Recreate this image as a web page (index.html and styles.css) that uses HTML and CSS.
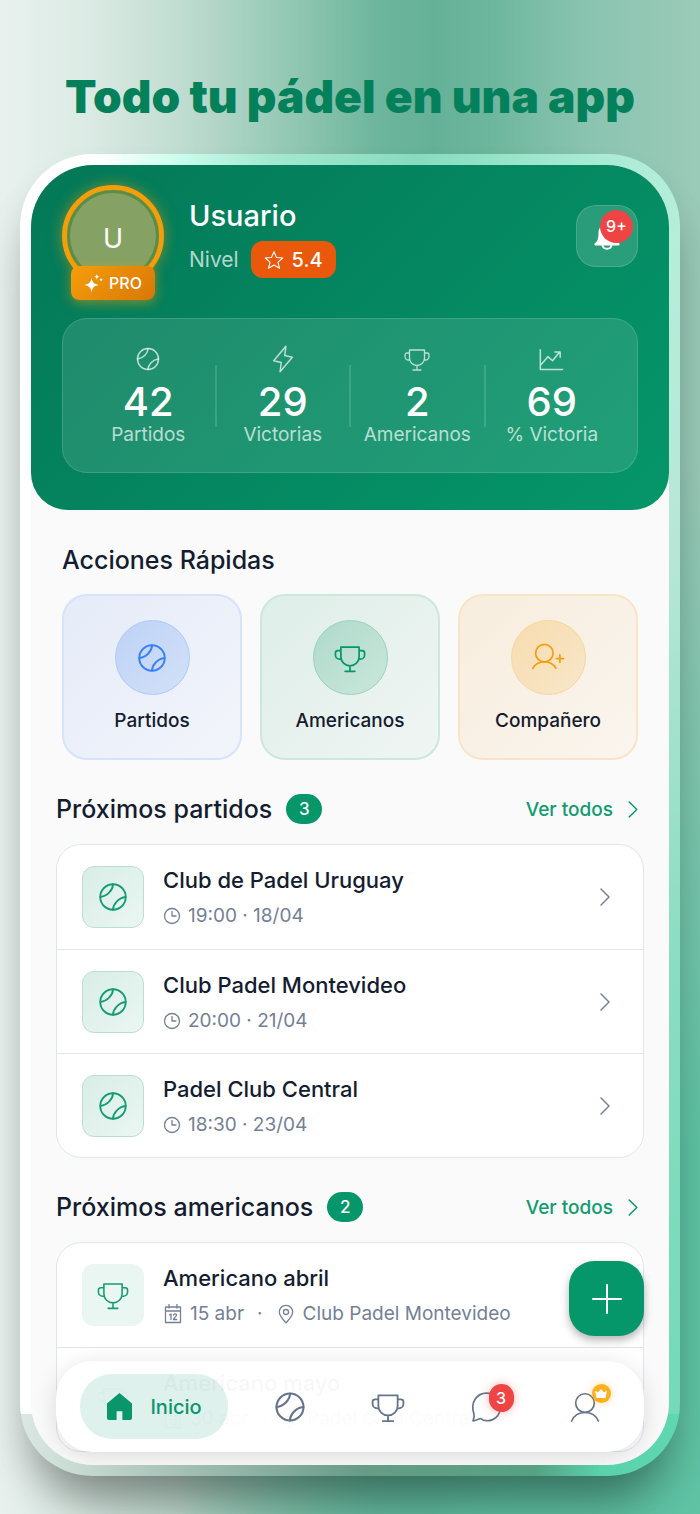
FILE: index.html
```html
<!DOCTYPE html>
<html lang="es">
<head>
<meta charset="utf-8">
<meta name="viewport" content="width=device-width, initial-scale=1">
<title>Todo tu pádel en una app</title>
<link rel="stylesheet" href="styles.css">
</head>
<body>
<svg class="defs" aria-hidden="true">
  <symbol id="ball" viewBox="0 0 24 24"><circle cx="12" cy="12" r="9"/><path d="M12 3C12 7 8 11.500 3.100 12M12 21C12 17 16 12.500 20.900 12"/></symbol>
  <symbol id="trophy" viewBox="0 0 28 24"><path d="M6.500 3h15v8a7.500 7.500 0 0 1-15 0zM6.500 6H4a2 2 0 0 0-2 2v1.500A3.500 3.500 0 0 0 5.500 13h1.300M21.500 6H24a2 2 0 0 1 2 2v1.500a3.500 3.500 0 0 1-3.500 3.500h-1.300M14 18.500V23M10 23h8"/></symbol>
  <symbol id="chevron" viewBox="0 0 12 20"><path d="M2 2l8 8-8 8"/></symbol>
  <symbol id="clock" viewBox="0 0 18 18"><circle cx="9" cy="9" r="7.500"/><path d="M9 4.500V9h4"/></symbol>
  <symbol id="calendar" viewBox="0 0 18 20"><path d="M1.500 3h15v15.500h-15zM1.500 7h15M5 .5V4M13 .5V4"/><path d="M5.500 11l1.500-1v5.500M9.500 11c.3-1.500 3.200-1.400 3 .3-.1 1.300-3 2.600-3 4.200h3.200"/></symbol>
  <symbol id="pin" viewBox="0 0 18 20"><path d="M9 18.800C6 15.500 2.300 12 2.300 8a6.700 6.700 0 0 1 13.400 0c0 4-3.700 7.500-6.700 10.800z"/><circle cx="9" cy="8" r="2.500"/></symbol>
</svg>
<main class="stage">
  <h1 class="slogan">Todo tu pádel en una app</h1>
  <div class="phone">
    <div class="screen">
      <header class="hero">
        <div class="profile">
          <div class="avatar-box">
            <div class="avatar">U</div>
            <span class="pro"><svg class="spark" viewBox="0 0 20 20"><path d="M8 4c1 5 2.500 6.500 7.500 7.500C10.500 12.500 9 14 8 19c-1-5-2.500-6.500-7.500-7.500C5.500 10.500 7 9 8 4zM13.500 0c.4 2 1 2.600 3 3-2 .4-2.600 1-3 3-.4-2-1-2.600-3-3 2-.4 2.600-1 3-3zM18 4c.2 1.200.7 1.700 2 2-1.300.3-1.800.8-2 2-.2-1.200-.7-1.700-2-2 1.300-.3 1.800-.8 2-2z"/></svg>PRO</span>
          </div>
          <div class="identity">
            <h2 class="name">Usuario</h2>
            <div class="level">Nivel <span class="rating"><svg class="icon i20" viewBox="0 0 24 24"><path d="M12 2l3 7 7.500.6-5.700 5 1.800 7.400L12 18l-6.600 4 1.800-7.400-5.700-5L9 9z"/></svg>5.4</span></div>
          </div>
          <button class="bell" aria-label="Notificaciones"><svg class="bell-icon" viewBox="0 0 28 28"><path fill="currentColor" d="M14 2c-5 0-8.500 4-8.500 8.500C5.500 17 4.500 19.500 2 21c-1.200 1-.5 2.500.5 2.500h23c1 0 1.700-1.500.5-2.500-2.500-1.500-3.500-4-3.500-10.500C22.500 6 19 2 14 2z"/><path fill="none" stroke="currentColor" stroke-width="2" d="M9.500 23c.5 5 8.500 5 9 0"/></svg><span class="bell-count">9+</span></button>
        </div>
        <ul class="stats">
          <li class="stat"><svg class="icon i28"><use href="#ball"/></svg><b>42</b><span>Partidos</span></li>
          <li class="stat"><svg class="icon i28" viewBox="0 0 24 24"><path d="M14.500 1L4 13.500l6.500 1.500L9.500 23 20 10.500 13.500 9z"/></svg><b>29</b><span>Victorias</span></li>
          <li class="stat"><svg class="icon i28"><use href="#trophy"/></svg><b>2</b><span>Americanos</span></li>
          <li class="stat"><svg class="icon i28" viewBox="0 0 24 24"><path d="M2 4v17h19M2.500 17l6-7 4 3.500 6-7.500M14.500 6h4.500v4.500"/></svg><b>69</b><span>% Victoria</span></li>
        </ul>
      </header>

      <section class="quick">
        <h2 class="heading">Acciones Rápidas</h2>
        <div class="tiles">
          <button class="tile blue"><span class="disc"><svg class="icon i34"><use href="#ball"/></svg></span>Partidos</button>
          <button class="tile green"><span class="disc"><svg class="icon i34"><use href="#trophy"/></svg></span>Americanos</button>
          <button class="tile amber"><span class="disc"><svg class="icon i34" viewBox="0 0 28 24"><circle cx="11" cy="8" r="7.200"/><path d="M1.500 20.500c4-7 15-7 19 0M20.800 12.500h6M23.800 9.500v6"/></svg></span>Compañero</button>
        </div>
      </section>

      <section class="block">
        <div class="block-head"><h2 class="heading">Próximos partidos</h2><span class="count">3</span><a class="all" href="#partidos">Ver todos <svg class="icon chev small"><use href="#chevron"/></svg></a></div>
        <ul class="list" id="partidos">
          <li class="row"><span class="thumb framed"><svg class="icon i34"><use href="#ball"/></svg></span><div class="info"><h3>Club de Padel Uruguay</h3><p><svg class="icon i18"><use href="#clock"/></svg>19:00 · 18/04</p></div><svg class="icon chev"><use href="#chevron"/></svg></li>
          <li class="row"><span class="thumb framed"><svg class="icon i34"><use href="#ball"/></svg></span><div class="info"><h3>Club Padel Montevideo</h3><p><svg class="icon i18"><use href="#clock"/></svg>20:00 · 21/04</p></div><svg class="icon chev"><use href="#chevron"/></svg></li>
          <li class="row"><span class="thumb framed"><svg class="icon i34"><use href="#ball"/></svg></span><div class="info"><h3>Padel Club Central</h3><p><svg class="icon i18"><use href="#clock"/></svg>18:30 · 23/04</p></div><svg class="icon chev"><use href="#chevron"/></svg></li>
        </ul>
      </section>

      <section class="block">
        <div class="block-head"><h2 class="heading">Próximos americanos</h2><span class="count">2</span><a class="all" href="#americanos">Ver todos <svg class="icon chev small"><use href="#chevron"/></svg></a></div>
        <ul class="list" id="americanos">
          <li class="row"><span class="thumb"><svg class="icon i34"><use href="#trophy"/></svg></span><div class="info"><h3>Americano abril</h3><p><svg class="icon i20"><use href="#calendar"/></svg>15 abr <span class="dot">·</span><svg class="icon i20"><use href="#pin"/></svg>Club Padel Montevideo</p></div></li>
          <li class="row"><span class="thumb"><svg class="icon i34"><use href="#trophy"/></svg></span><div class="info"><h3>Americano mayo</h3><p><svg class="icon i20"><use href="#calendar"/></svg>30 abr <span class="dot">·</span><svg class="icon i20"><use href="#pin"/></svg>Padel Club Central</p></div></li>
        </ul>
      </section>

      <button class="add" aria-label="Añadir"><svg class="icon i34" viewBox="0 0 34 34"><path d="M17 3v28M3 17h28"/></svg></button>
      <nav class="tabs">
        <a class="tab active" href="#inicio"><svg class="home" viewBox="0 0 28 28"><path d="M14 0L1 11v15a2 2 0 0 0 2 2h8v-9h6v9h8a2 2 0 0 0 2-2V11z"/></svg>Inicio</a>
        <a class="tab" href="#partidos" aria-label="Partidos"><svg class="icon i36"><use href="#ball"/></svg></a>
        <a class="tab" href="#americanos" aria-label="Americanos"><svg class="icon i36"><use href="#trophy"/></svg></a>
        <a class="tab" href="#chat" aria-label="Mensajes"><svg class="icon i34" viewBox="0 0 28 28"><path d="M2.500 25.500c1-2 1.200-4 .7-6C0 10 6 2.500 13.500 2.500S25 8 25 14.500 19.500 25.800 13.500 25.300c-2 0-3.500-.8-4.500-1.800-1.800.3-4 1.700-6.500 2z"/></svg><span class="tab-badge">3</span></a>
        <a class="tab" href="#perfil" aria-label="Perfil"><svg class="icon i34" viewBox="0 0 28 28"><circle cx="14" cy="10.800" r="7.700"/><path d="M3 25.500c4-9.300 18-9.300 22 0"/></svg><span class="crown"><svg viewBox="0 0 12 10"><path d="M0 1.500l3 2L6 0l3 3.500 3-2L10.500 9h-9z"/></svg></span></a>
      </nav>
    </div>
  </div>
</main>
</body>
</html>
```
FILE: styles.css
```css
* { box-sizing: border-box; }
body { margin: 0; font-family: Inter, "Noto Sans", sans-serif; color: #141c2f; }
h1, h2, h3, p, ul { margin: 0; padding: 0; }
ul { list-style: none; }
button { font: inherit; color: inherit; border: 0; padding: 0; background: none; cursor: pointer; }
a { color: inherit; text-decoration: none; }
.defs { position: absolute; width: 0; height: 0; }
.icon { flex: none; fill: none; stroke: currentColor; stroke-width: 1.3; stroke-linecap: round; stroke-linejoin: round; }
.i18 { width: 18px; height: 18px; }
.i20 { width: 20px; height: 20px; }
.i28 { width: 28px; height: 28px; }
.i34 { width: 34px; height: 34px; }
.i36 { width: 36px; height: 36px; }

.stage {
  padding: 60px 20px 38px;
  overflow: hidden;
  background:
    radial-gradient(ellipse 75% 70% at 100% 100%, #5fc3a4 0%, #5fc3a4 35%, rgba(95, 195, 164, 0) 100%),
    linear-gradient(90deg, #e9f1ee 0%, #dcebe5 12%, #c0dcd1 26%, #8bc4af 44%, #6db59d 54%, #65b198 62%, #6db69e 70%, #8ac4b0 84%, #9bcab9 100%);
}
.slogan { height: 94px; text-align: center; font-size: 46px; line-height: 72px; font-weight: 900; color: #04805b; white-space: nowrap; }
.phone {
  padding: 11px;
  border-radius: 72px;
  background:
    linear-gradient(90deg, #dbe8e3 0%, #a3bfb3 25%, #679c87 52%, #56a184 78%, #59d2aa 88%, #5fd8b2 100%) bottom / 100% 62px no-repeat,
    linear-gradient(90deg, #fff 0%, #fff 12%, #d2fff0 22%, #a4e8d0 38%, #87dcbd 60%, #a6ead3 85%, #b5eedb 100%) top / 100% 80px no-repeat,
    linear-gradient(180deg, #b5eedb 5%, #b7e6d7 30%, #8cddc2 60%, #70d9b8 100%) right / 50% 100% no-repeat,
    #fcfffe;
  box-shadow: 0 40px 50px -18px rgba(0, 0, 0, .4), 0 20px 36px rgba(0, 0, 0, .07);
}
.screen { position: relative; height: 1300px; overflow: hidden; border-radius: 62px; background: #fafafa; }

.hero { padding: 20px 31px 37px; border-radius: 0 0 37px 37px; color: #fff; background: linear-gradient(135deg, #047857, #059669); }
.profile { display: flex; gap: 25px; height: 133px; }
.avatar-box { position: relative; width: 102px; }
.avatar { display: grid; place-items: center; height: 102px; padding-top: 4px; border: 5px solid #f59e0b; border-radius: 50%; background: #85a264; background-clip: padding-box; box-shadow: 0 0 14px rgba(245, 158, 11, .5), inset 0 0 0 3px #5b8d45; font-size: 27px; }
.pro { position: absolute; left: 9px; top: 81px; display: flex; align-items: center; justify-content: center; gap: 6px; width: 84px; height: 34px; border-radius: 8px; font-size: 16px; font-weight: 500; background: linear-gradient(135deg, #f59e0b, #d97706); box-shadow: 0 3px 12px rgba(245, 158, 11, .5); }
.spark { width: 19px; height: 19px; fill: currentColor; }
.identity { flex: 1; padding-top: 12px; }
.name { font-size: 29px; line-height: 38px; font-weight: 500; }
.level { display: flex; align-items: center; gap: 12px; margin-top: 6px; font-size: 21px; color: rgba(255, 255, 255, .7); }
.rating { display: flex; align-items: center; justify-content: center; gap: 8px; width: 85px; height: 37px; border-radius: 12px; background: #ea580c; color: #fff; font-size: 20px; font-weight: 500; }
.bell { position: relative; display: grid; place-items: center; width: 62px; height: 62px; margin-top: 20px; border: 1px solid rgba(255, 255, 255, .15); border-radius: 20px; background: rgba(255, 255, 255, .15); color: #fff; }
.bell-icon { width: 28px; height: 30px; }
.bell-count { position: absolute; top: 4px; right: 4px; width: 33px; height: 33px; border-radius: 50%; background: #ef4444; font-size: 16px; line-height: 33px; font-weight: 500; }
.stats { display: grid; grid-template-columns: repeat(4, 1fr); height: 155px; padding: 26px 18px; border: 1px solid rgba(255, 255, 255, .14); border-radius: 25px; background: rgba(255, 255, 255, .11); }
.stat { position: relative; display: flex; flex-direction: column; align-items: center; color: rgba(255, 255, 255, .7); }
.stat + .stat::before { content: ""; position: absolute; left: -1px; top: 20px; width: 2px; height: 62px; background: rgba(255, 255, 255, .14); }
.stat b { margin-top: 8px; font-size: 40px; line-height: 42px; font-weight: 500; color: #fff; }
.stat span { font-size: 19px; line-height: 24px; }

.heading { font-size: 25px; line-height: 36px; font-weight: 500; white-space: nowrap; }
.quick { padding: 32px 31px 0; }
.tiles { display: grid; grid-template-columns: repeat(3, 1fr); gap: 18px; margin-top: 16px; }
.tile { display: flex; flex-direction: column; align-items: center; gap: 14px; height: 166px; padding-top: 24px; border: 2px solid; border-radius: 25px; font-size: 19px; line-height: 24px; font-weight: 500; }
.disc { display: grid; place-items: center; width: 75px; height: 75px; border: 1px solid; border-radius: 50%; }
.blue { border-color: #d6e3fb; background: linear-gradient(135deg, #e5ebf8, #f2f5fb); }
.blue .disc { color: #3b82f6; border-color: #b0c9f7; background: linear-gradient(135deg, #bed2f6, #d3e1f8); }
.green { border-color: #cce8dd; background: linear-gradient(135deg, #deeee8, #f0f5f3); }
.green .disc { color: #059669; border-color: #98d2bd; background: linear-gradient(135deg, #afdacb, #cae7dc); }
.amber { border-color: #f9e5c5; background: linear-gradient(135deg, #f8eddd, #faf5ef); }
.amber .disc { color: #f59e0b; border-color: #f6d69e; background: linear-gradient(135deg, #f7dcae, #f8e7ca); }
.tile .disc .icon { stroke-width: 1.4; }

.block { padding: 30px 25px 0; }
.block-head { display: flex; align-items: center; height: 38px; }
.count { display: grid; place-items: center; width: 36px; height: 30px; margin-left: 14px; border-radius: 15px; background: #059669; color: #fff; font-size: 17px; font-weight: 500; }
.all { display: flex; align-items: center; gap: 14px; margin-left: auto; padding-right: 5px; font-size: 19px; font-weight: 500; color: #119b70; }
.chev { width: 12px; height: 22px; color: #748096; stroke-width: 1.5; }
.small { height: 19px; color: #059669; }
.list { margin-top: 16px; border: 1px solid #dfe5ed; border-radius: 25px; background: #fff; overflow: hidden; }
.row { display: flex; align-items: center; gap: 19px; height: 104px; padding: 0 32px 0 25px; }
.row + .row { border-top: 1px solid #dfe5ed; }
.thumb { display: grid; place-items: center; width: 62px; height: 62px; border-radius: 12px; background: #eaf6f2; color: #149d72; }
.framed { border: 1px solid #b8dfd1; background: linear-gradient(135deg, #d9ede6, #ebf6f2); }
.info { flex: 1; }
.info h3 { font-size: 22px; line-height: 30px; font-weight: 500; white-space: nowrap; }
.info p { display: flex; align-items: center; gap: 7px; margin-top: 8px; font-size: 19px; line-height: 26px; color: #748096; white-space: nowrap; }
.dot { margin: 0 6px; }

.add { position: absolute; right: 25px; bottom: 129px; display: grid; place-items: center; width: 75px; height: 75px; border-radius: 25px; background: #059669; color: #fff; box-shadow: 0 4px 8px rgba(0, 0, 0, .3); }
.add .icon { stroke-width: 2; }
.tabs { position: absolute; left: 25px; right: 25px; bottom: 13px; display: flex; align-items: center; height: 91px; padding: 0 10px 0 24px; border-radius: 37px; background: rgba(255, 255, 255, .97); box-shadow: 0 4px 24px rgba(0, 0, 0, .13); }
.tab { position: relative; display: grid; place-items: center; flex: 1; height: 65px; color: #64748b; }
.tab .icon { stroke-width: 1.4; }
.active { flex: none; display: flex; justify-content: center; gap: 17px; width: 148px; margin-right: 13px; border-radius: 32px; background: rgba(5, 150, 105, .13); color: #0a966b; font-size: 20px; font-weight: 500; }
.home { width: 27px; height: 27px; fill: currentColor; }
.tab-badge { position: absolute; left: calc(50% + 2px); top: 10px; width: 25px; height: 28px; border-radius: 13px; background: #ef4444; color: #fff; font-size: 16px; line-height: 28px; font-weight: 500; text-align: center; box-shadow: 0 0 10px rgba(239, 68, 68, .4); }
.crown { position: absolute; left: calc(50% + 7px); top: 10px; display: grid; place-items: center; width: 19px; height: 19px; border-radius: 50%; background: #fbb01e; box-shadow: 0 0 9px rgba(245, 158, 11, .4); }
.crown svg { width: 12px; height: 10px; fill: #fff; }
```
